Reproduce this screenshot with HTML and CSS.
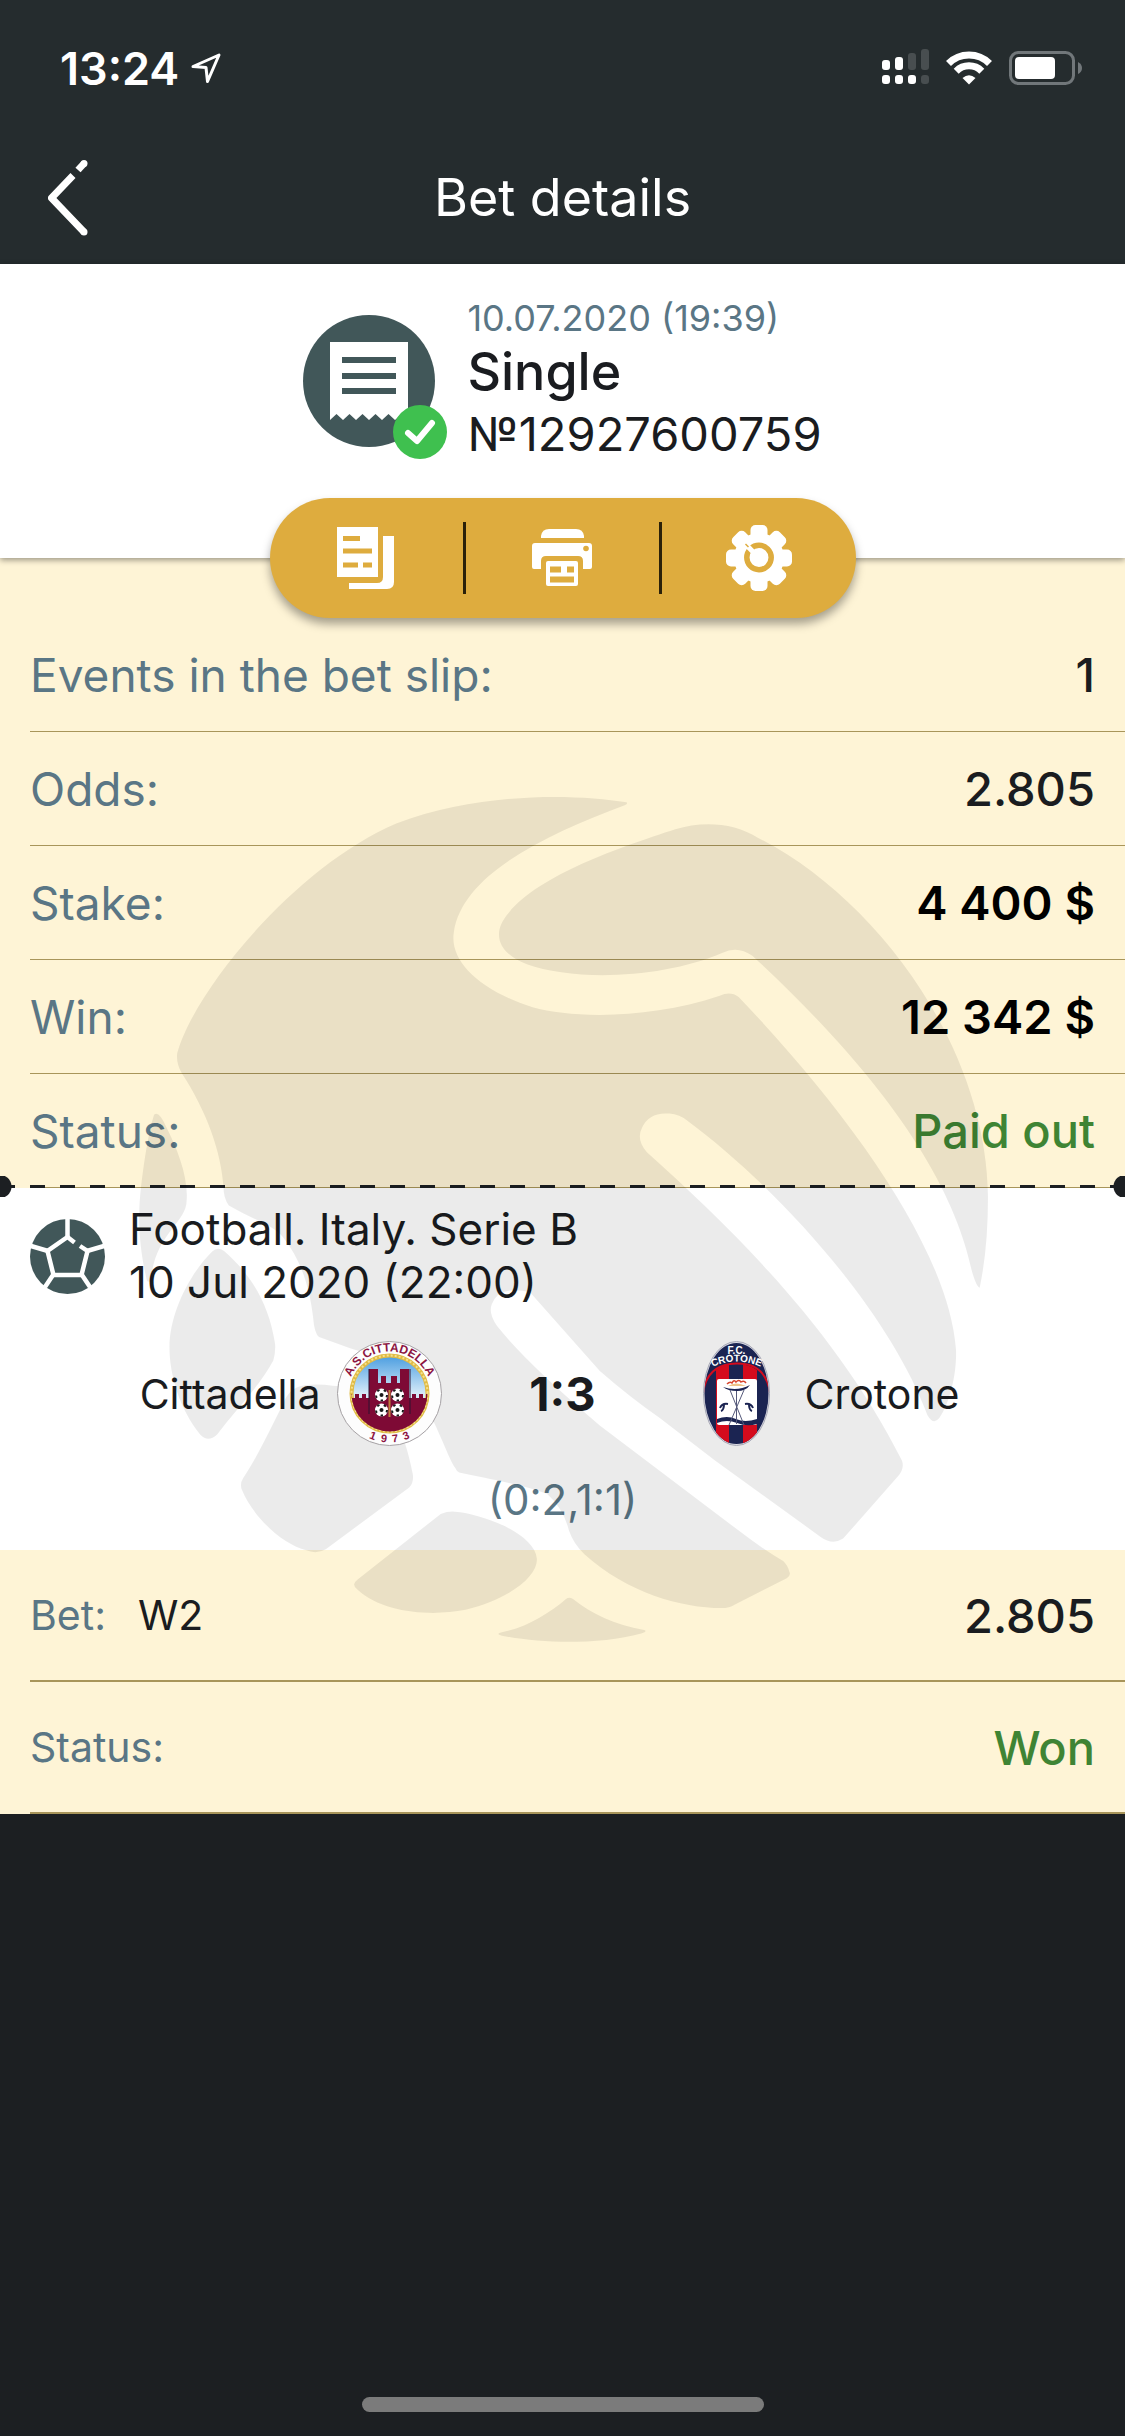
FILE: index.html
```html
<!DOCTYPE html>
<html lang="en">
<head>
  <meta charset="UTF-8" />
  <title>Bet details</title>
  <meta name="viewport" content="width=device-width, initial-scale=1.0" />
  <link rel="stylesheet" href="styles.css">
</head>
<body>
  <div class="status-bar">
    <div class="clock">
      <span>13:24</span>
      <svg width="30" height="32" viewBox="0 0 30 32" fill="none" stroke="#fff" stroke-width="3" stroke-linejoin="round">
        <path d="M2 14.500 28 3 16.500 29.500 15 15.500z" />
      </svg>
    </div>
    <svg width="202" height="38" viewBox="0 0 202 38">
      <g fill="#fff">
        <rect x="0" y="11" width="8" height="10" rx="3" />
        <rect x="13" y="8" width="8" height="13" rx="3" />
        <rect x="0" y="26" width="8" height="9" rx="3" />
        <rect x="13" y="26" width="8" height="9" rx="3" />
        <rect x="26" y="26" width="8" height="9" rx="3" />
      </g>
      <g fill="#484e50">
        <rect x="26" y="4" width="8" height="17" rx="3" />
        <rect x="39" y="0" width="8" height="21" rx="3" />
        <rect x="39" y="26" width="8" height="9" rx="3" />
      </g>
      <g fill="none" stroke="#fff" stroke-width="7">
        <path d="M66.500 14.500a29 29 0 0 1 41 0" />
        <path d="M74.200 22.200a18 18 0 0 1 25.600 0" />
      </g>
      <path d="M87 35.500l-6.500-6.500q6.500-5.500 13 0z" fill="#fff" />
      <rect x="128.500" y="3.500" width="63" height="31" rx="8" fill="none" stroke="#71777a" stroke-width="3" />
      <rect x="133" y="8" width="40" height="22" rx="4" fill="#fff" />
      <path d="M196 13q4 2 4 6t-4 6z" fill="#71777a" />
    </svg>
  </div>

  <header class="nav-bar">
    <a class="back-btn" href="#" aria-label="Back">
      <svg width="42" height="80" viewBox="0 0 42 80" fill="none" stroke="#fff" stroke-width="7" stroke-linejoin="round">
        <path d="M36 74 3.500 40 25 17.500" />
        <path d="M30 12 36 5.500" />
        <circle cx="36" cy="74" r="3.500" fill="#fff" stroke="none" />
        <circle cx="36" cy="5.500" r="3.500" fill="#fff" stroke="none" />
      </svg>
    </a>
    <h1>Bet details</h1>
  </header>

  <main>
    <section class="ticket-head">
      <svg width="144" height="144" viewBox="0 0 144 144">
        <circle cx="66" cy="66" r="66" fill="#415759" />
        <path d="M27 27h78v78l-6.500-6-6.500 6-6.500-6-6.500 6-6.500-6-6.500 6-6.500-6-6.500 6-6.500-6-6.500 6-6.500-6-6.500 6z" fill="#fff" />
        <path d="M39 45h54M39 61h54M39 76h54" stroke="#415759" stroke-width="6" />
        <circle cx="117" cy="117" r="27" fill="#3fc04f" />
        <path d="M105 118l9 8 15-18" fill="none" stroke="#fff" stroke-width="6" stroke-linecap="round" stroke-linejoin="round" />
      </svg>
      <div class="ticket-info">
        <p class="ticket-date">10.07.2020 (19:39)</p>
        <p class="ticket-type">Single</p>
        <p class="ticket-number">№12927600759</p>
      </div>

      <div class="toolbar">
        <button type="button" aria-label="Copy">
          <svg width="58" height="62" viewBox="0 0 58 62">
            <path d="M0 0h41v50H0z" fill="#fff" />
            <path d="M6 9h17v5H6zM6 21.500h29v5H6zM6 35.500h15v5H6zM26 35.500h9v5h-9z" fill="#deac3e" />
            <path d="M46 9h11v46q0 7-7 7H12v-6h28q6 0 6-6z" fill="#fff" />
          </svg>
        </button>
        <button type="button" aria-label="Print">
          <svg width="60" height="58" viewBox="0 0 60 58">
            <g fill="#fff">
              <path d="M9 9V7q1-7 8-7h27q7 0 8 7v2z" />
              <path d="M3 14h54q3 0 3 3v21q0 2-2 2h-7v-8q0-5-5-5H14q-5 0-5 5v8H2q-2 0-2-2V17q0-3 3-3z" />
              <rect x="14" y="32" width="32" height="25" rx="2" />
            </g>
            <g fill="#deac3e">
              <circle cx="54" cy="19.500" r="2.800" />
              <path d="M18 37.500h11v6H18zM35 37.500h7v6h-7zM18 47.500h24v6H18z" />
            </g>
          </svg>
        </button>
        <button type="button" aria-label="Settings">
          <svg width="66" height="66" viewBox="0 0 66 66">
            <g fill="#fff">
              <circle cx="33" cy="33" r="25" />
              <rect x="24.500" y="0" width="17" height="66" rx="5" />
              <rect x="24.500" y="0" width="17" height="66" rx="5" transform="rotate(45 33 33)" />
              <rect x="24.500" y="0" width="17" height="66" rx="5" transform="rotate(90 33 33)" />
              <rect x="24.500" y="0" width="17" height="66" rx="5" transform="rotate(135 33 33)" />
            </g>
            <circle cx="33" cy="32.500" r="12.200" fill="none" stroke="#deac3e" stroke-width="5.500" />
            <path d="M18 17.500 30 30" stroke="#fff" stroke-width="5" />
            <path d="M22.500 22 19.500 19" stroke="#deac3e" stroke-width="1.500" />
          </svg>
        </button>
      </div>
    </section>

    <section class="slip">
      <dl class="summary">
        <div class="row"><dt>Events in the bet slip:</dt><dd>1</dd></div>
        <div class="row"><dt>Odds:</dt><dd>2.805</dd></div>
        <div class="row"><dt>Stake:</dt><dd class="money">4 400 $</dd></div>
        <div class="row"><dt>Win:</dt><dd class="money">12 342 $</dd></div>
        <div class="row"><dt>Status:</dt><dd class="good">Paid out</dd></div>
      </dl>

      <div class="event">
        <div class="event-head">
          <svg width="75" height="75" viewBox="0 0 75 75">
            <circle cx="37.500" cy="37.500" r="37.500" fill="#415759" />
            <g fill="none" stroke="#fff" stroke-width="4.500">
              <path d="M44.500 23.500 37.500 18 17.500 32l6 24h28l6-24L50 27" />
              <path d="M37.500 19V0M18 32 1 27M57 32l17-5M23 56l-8 12M52 56l8 12" />
            </g>
          </svg>
          <p>Football. Italy. Serie B<br>10 Jul 2020 (22:00)</p>
        </div>

        <div class="teams">
          <div class="team home">
            <span>Cittadella</span>
            <svg class="crest" width="105" height="105" viewBox="0 0 105 105">
              <defs>
                <linearGradient id="sky" x1="0" y1="0" x2="0" y2="1">
                  <stop offset="0" stop-color="#4a9de0" />
                  <stop offset=".5" stop-color="#d5eaf8" />
                </linearGradient>
                <clipPath id="shield"><circle cx="52.500" cy="52.500" r="38" /></clipPath>
                <path id="arc-top" d="M10.500 52.500a42 42 0 0 1 84 0" />
                <path id="arc-bottom" d="M3.500 52.500a49 49 0 0 0 98 0" />
              </defs>
              <circle cx="52.500" cy="52.500" r="52" fill="#fdfdfd" stroke="#a5a1a4" />
              <circle cx="52.500" cy="52.500" r="38" fill="url(#sky)" stroke="#e0bb45" stroke-width="4" />
              <circle cx="52.500" cy="52.500" r="38" fill="none" stroke="#f5e08d" stroke-width="2" stroke-dasharray="2 2" />
              <g clip-path="url(#shield)">
                <path d="M10 53h5v4h3v-4h4v4h3v-4h4v4h3V28h9v14h3v-7h5v7h5v-7h6v7h3V28h9v29h3v-4h4v4h3v-4h4v4h3v-4h9v42H10z" fill="#7e0a35" />
                <path d="M32 28v45M73 28v45" stroke="#2c1330" />
              </g>
              <path d="M52.500 49v27" stroke="#c0823e" stroke-width="2" />
              <g fill="#fff">
                <circle cx="44.500" cy="54" r="6.500" />
                <circle cx="60.500" cy="54" r="6.500" />
                <circle cx="44.500" cy="69" r="6.500" />
                <circle cx="60.500" cy="69" r="6.500" />
              </g>
              <g fill="none" stroke="#191919" stroke-width="2" stroke-dasharray="2.500 4.400">
                <circle cx="44.500" cy="54" r="5.500" />
                <circle cx="60.500" cy="54" r="5.500" />
                <circle cx="44.500" cy="69" r="5.500" />
                <circle cx="60.500" cy="69" r="5.500" />
              </g>
              <g fill="#191919">
                <circle cx="44.500" cy="54" r="2" />
                <circle cx="60.500" cy="54" r="2" />
                <circle cx="44.500" cy="69" r="2" />
                <circle cx="60.500" cy="69" r="2" />
              </g>
              <text class="crest-name"><textPath href="#arc-top" startOffset="50%">A.S.CITTADELLA</textPath></text>
              <text class="crest-year"><textPath href="#arc-bottom" startOffset="50%">1&#160;&#160;9&#160;&#160;7&#160;&#160;3</textPath></text>
            </svg>
          </div>
          <strong class="score">1:3</strong>
          <div class="team away">
            <svg class="crest" width="105" height="105" viewBox="0 0 105 105">
              <defs>
                <clipPath id="oval"><ellipse cx="52.500" cy="52.500" rx="32" ry="50.500" /></clipPath>
                <path id="arc-crotone" d="M26 27q26.500-13 53 0" />
              </defs>
              <ellipse cx="52.500" cy="52.500" rx="33" ry="52" fill="#dcdce4" stroke="#a6a7b5" />
              <g clip-path="url(#oval)">
                <path d="M0 0h105v105H0z" fill="#1b2452" />
                <path d="M32 105V29q5-4 13-6v82zM59 105V23q8 2 14 6v76z" fill="#d40b1d" />
                <path d="M19 52q4-29 33.500-29.500T86 52" fill="none" stroke="#d40b1d" stroke-width="2" />
                <rect x="33" y="38" width="40" height="46" rx="2" fill="#fff" />
                <path d="M33 78q10-4 19 0t21 0v5q-10 3-20-1t-20 0z" fill="#1b2452" />
                <path d="M45 84 60 49M60 84 46 49M52.500 50v33" fill="none" stroke="#55597a" />
                <path d="M39 46q14 5 27-2-4 6-13 6t-14-4z" fill="#1b2452" />
                <path d="M44 45q8-5 18 0z" fill="#efc489" />
                <path d="M43 43q3-3 5-1 2-4 4-1 3-3 5 0 3-2 5 1" fill="none" stroke="#d8452d" stroke-width="1.500" />
                <path d="M36 67q2-5 8-4M37 70q3-1 3-7M69 67q-2-5-8-4M68 70q-3-1-3-7" fill="none" stroke="#1b2452" stroke-width="2" />
              </g>
              <text class="crest-fc" x="52.500" y="13">F.C.</text>
              <text class="crest-fc"><textPath href="#arc-crotone" startOffset="50%">CROTONE</textPath></text>
            </svg>
            <span>Crotone</span>
          </div>
        </div>
        <p class="periods">(0:2,1:1)</p>
      </div>

      <dl class="bets">
        <div class="row"><dt>Bet:</dt><dd class="pick">W2</dd><dd class="value">2.805</dd></div>
        <div class="row"><dt>Status:</dt><dd class="value good">Won</dd></div>
      </dl>

      <svg class="watermark" viewBox="65 62 1432 1473" preserveAspectRatio="none" aria-hidden="true">
        <path d="M888 73C800 58 640 55 500 110 330 185 160 400 131 510q-2 18 8 35C180 610 205 680 209 743q0 20 9 32C260 800 295 810 309 830 340 870 354 918 360 970q2 28 10 34 50 20 100 35C510 1055 540 1100 548 1121 570 1160 590 1220 599 1231q3 7 7 9C650 1250 710 1260 754 1277q28 26 37 64 8 24 26 41C890 1450 980 1475 1048 1476q14 0 22-6l88-46q8-6 4-12-2-10-10-18Q1120 1375 1077 1341L843 1158Q720 1050 670 985q-15-22-9-38 10-28 45-24 12 0 22 6l115 134q50 45 101 82l93 74 178 133q20 15 38 3l92-108q12-14 7-28C1240 990 1070 820 922 682q-18-22-8-42 12-28 46-25 18 2 30 12C1150 750 1330 960 1395 1140q10 18 20 5C1435 1115 1445 1060 1443 1025 1430 850 1260 610 1077 412q-14-11-32-2C930 450 800 450 730 430 640 400 590 350 597 300 610 200 750 130 885 78q6-3 3-5z" />
        <path d="M970 120c45-15 100-12 140 15C1310 240 1495 500 1497 760q0 90-14 158-5 0-13-28C1440 740 1330 560 1100 340q-25-18-50-5C950 380 800 385 720 355 670 335 660 300 690 265 740 200 880 150 970 120z" />
        <path d="M92 617q8-8 20 20c20 40 38 90 35 129 0 40-55 60-60 140q-5 3-7 0C65 840 65 790 70 743 75 700 82 650 92 617z" />
        <path d="M190 855q9-9 20-1C250 890 285 940 296 1016q1 15-3 29C270 1090 230 1130 198 1174q-15 14-28 0C135 1130 118 1070 118 1022 118 960 155 890 190 855z" />
        <path d="M341 1089q25-5 52 0C430 1090 475 1110 496 1144 510 1170 520 1200 528 1243q2 14-6 23L382 1373q-15 10-35 2C310 1365 260 1320 240 1270q-4-10 2-20C265 1215 290 1160 309 1121q10-27 32-32z" />
        <path d="M575 1312q12-5 24-4c50 4 135 40 138 82 2 30-45 70-120 89-60 12-140 5-182-35q-12-9 0-18z" />
        <path d="M786 1460q5-4 12 0c30 25 70 45 120 54q6 2-5 6c-70 20-170 18-235 4q-12-3 0-6c40-8 80-33 108-58z" />
      </svg>
    </section>
  </main>

  <div class="home-indicator"></div>
</body>
</html>
```
FILE: styles.css
```css
* {
  box-sizing: border-box;
}

body {
  margin: 0;
  min-height: 100vh;
  display: flex;
  flex-direction: column;
  font-family: Inter, 'Liberation Sans', sans-serif;
  background-color: #1c1f22;
  color: #1a1c20;
}

h1,
p,
dl,
dd {
  margin: 0;
}

svg {
  display: block;
  flex-shrink: 0;
}

.status-bar {
  display: flex;
  justify-content: space-between;
  align-items: center;
  height: 132px;
  padding: 4px 41px 0 60px;
  background-color: #252c2e;
}

.clock {
  display: flex;
  align-items: center;
  gap: 12px;
  font-size: 45px;
  font-weight: 600;
  color: #fff;
}

.nav-bar {
  display: grid;
  grid-template-columns: 1fr auto 1fr;
  align-items: center;
  height: 132px;
  padding: 0 48px;
  background-color: #252c2e;
  color: #fff;
}

.back-btn {
  justify-self: start;
}

.nav-bar h1 {
  font-size: 52px;
  font-weight: 400;
  line-height: 60px;
}

.ticket-head {
  position: relative;
  z-index: 1;
  display: flex;
  justify-content: center;
  gap: 20px;
  height: 294px;
  padding-top: 28px;
  background-color: #fff;
  box-shadow: 0 2px 6px rgba(0, 0, 0, 0.4);
}

.ticket-head > svg {
  margin-top: 23px;
}

.ticket-date {
  font-size: 36px;
  line-height: 52px;
  color: #5a7685;
}

.ticket-type {
  font-size: 52px;
  font-weight: 500;
  line-height: 56px;
}

.ticket-number {
  font-size: 47px;
  line-height: 68px;
}

/* floats over the edge between the head and the slip */
.toolbar {
  position: absolute;
  left: 50%;
  bottom: 0;
  transform: translate(-50%, 50%);
  display: flex;
  width: 586px;
  height: 120px;
  padding: 24px 0;
  border-radius: 60px;
  background-color: #deac3e;
  box-shadow: 0 6px 10px rgba(0, 0, 0, 0.35);
}

.toolbar button {
  flex: 1;
  display: flex;
  justify-content: center;
  align-items: center;
  padding: 0;
  border: none;
  background: none;
  cursor: pointer;
}

.toolbar button:not(:last-child) {
  border-right: 3px solid #2b2109;
}

.slip {
  position: relative;
  overflow: hidden;
  background-color: #fef4d6;
}

.summary {
  padding-top: 60px;
}

.row {
  display: flex;
  align-items: center;
  margin-left: 30px;
  padding-right: 30px;
  border-bottom: 1px solid #a8955a;
}

.row dt {
  color: #5a7685;
}

.summary .row {
  justify-content: space-between;
  height: 114px;
  font-size: 46px;
}

.summary dd,
.value {
  font-size: 47px;
  font-weight: 500;
}

.summary .money {
  font-weight: 600;
  color: #000;
}

.summary .good,
.bets .good {
  color: #3f8434;
}

.event {
  position: relative;
  height: 362px;
  padding: 15px 30px 0;
  background-color: #fff;
}

/* perforation with a punched hole at each edge */
.event::before {
  content: "";
  position: absolute;
  left: 0;
  right: 0;
  top: -12px;
  height: 21px;
  background:
    radial-gradient(circle at 0 50%, #1c1f22 11px, transparent 12px),
    radial-gradient(circle at 100% 50%, #1c1f22 11px, transparent 12px),
    repeating-linear-gradient(90deg, #1c1f22 0 15px, transparent 15px 30px) 0 9px / 100% 3px no-repeat;
}

.event-head {
  display: flex;
  align-items: center;
  gap: 24px;
  font-size: 44px;
  line-height: 53px;
}

.teams {
  display: grid;
  grid-template-columns: 1fr 242px 1fr;
  align-items: center;
  margin-top: 32px;
}

.team {
  display: flex;
  align-items: center;
  gap: 16px;
  font-size: 41px;
}

.home {
  justify-content: flex-end;
}

.crest {
  position: relative;
  z-index: 1;
  overflow: visible;
}

.crest-name,
.crest-year {
  font: bold 12px 'Liberation Sans', sans-serif;
  text-anchor: middle;
  fill: #8c1442;
}

.crest-year {
  font-size: 11px;
}

.crest-fc {
  font: bold 10px 'Liberation Sans', sans-serif;
  text-anchor: middle;
  fill: #fff;
}

.score {
  font-size: 47px;
  text-align: center;
}

.periods {
  margin-top: 26px;
  font-size: 42px;
  line-height: 56px;
  text-align: center;
  color: #5a7685;
}

.bets .row {
  height: 132px;
  border-bottom-width: 2px;
  font-size: 41px;
}

.pick {
  margin-left: 32px;
}

.value {
  margin-left: auto;
}

.watermark {
  position: absolute;
  left: 50%;
  top: 238px;
  width: 850px;
  height: 846px;
  transform: translateX(-50%);
  fill: rgba(0, 0, 0, 0.08);
  pointer-events: none;
}

.home-indicator {
  align-self: center;
  width: 402px;
  height: 15px;
  margin-top: auto;
  margin-bottom: 24px;
  border-radius: 8px;
  background-color: #7b7b7b;
}
```
